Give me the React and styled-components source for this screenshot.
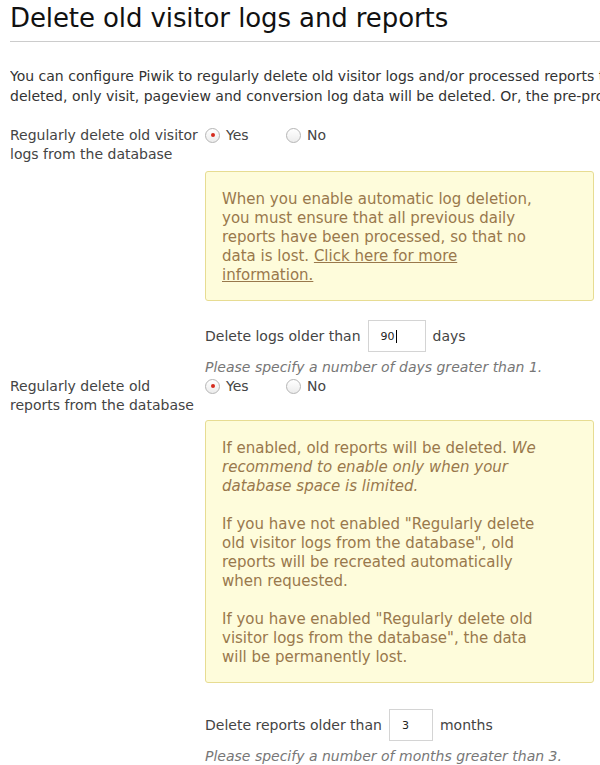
import React from 'react'
import styled, { createGlobalStyle } from 'styled-components'

const GlobalStyle = createGlobalStyle`
  body {
    margin: 0;
    background: #fff;
    font-family: "DejaVu Sans", Verdana, sans-serif;
    color: #333;
    overflow: hidden;
  }
`

const Page = styled.div`
  padding: 0 0 0 10px;
  width: 590px;
`

const Title = styled.h2`
  margin: 0;
  padding: 3px 0 7px;
  font-size: 26px;
  line-height: 31px;
  font-weight: normal;
  color: #111;
  letter-spacing: -0.1px;
  border-bottom: 1px solid #ccc;
  white-space: nowrap;
`

const Intro = styled.p`
  margin: 24px 0 20px;
  font-size: 14px;
  line-height: 20px;
  white-space: nowrap;
  overflow: hidden;
`

const Row = styled.div`
  display: grid;
  grid-template-columns: 195px 1fr;
`

const Label = styled.div`
  font-size: 14px;
  line-height: 18.5px;
  color: #444;
  white-space: nowrap;
`

const Field = styled.div`
  display: flex;
  flex-direction: column;
  padding-right: 6px;
`

const Radios = styled.div`
  display: flex;
  height: 18px;
  align-items: center;
`

const Option = styled.label`
  display: flex;
  align-items: center;
  gap: 6px;
  min-width: 81px;
  font-size: 14px;
  color: #444;
`

const Circle = styled.span`
  width: 13px;
  height: 13px;
  border-radius: 50%;
  border: 1px solid #b5b5b5;
  background: linear-gradient(#ffffff, #ececec);
  display: flex;
  align-items: center;
  justify-content: center;

  &::after {
    content: '';
    width: 4px;
    height: 4px;
    border-radius: 50%;
    background: ${(p) => (p.checked ? '#d52b1e' : 'transparent')};
  }
`

const Notice = styled.div`
  margin-top: ${(p) => p.top}px;
  background: #fefcdb;
  border: 1px solid #e7dc92;
  border-radius: 3px;
  padding: 18px 16px 15px;
  font-size: 15px;
  line-height: 19px;
  color: #99784c;
  white-space: nowrap;

  p {
    margin: 0 0 19px;
  }
  p:last-child {
    margin-bottom: 0;
  }
  a {
    color: #99784c;
    text-decoration: underline;
  }
`

const Older = styled.div`
  display: flex;
  align-items: center;
  gap: 7px;
  margin-top: ${(p) => p.top}px;
  font-size: 14px;
  color: #444;
`

const Input = styled.div`
  box-sizing: border-box;
  width: ${(p) => p.w}px;
  height: 32px;
  border: 1px solid #d4d4d4;
  display: flex;
  align-items: center;
  padding-left: 12px;
  font-size: 11px;
  color: #222;
`

const Caret = styled.span`
  display: inline-block;
  width: 1px;
  height: 13px;
  background: #000;
  margin-left: 1px;
`

const Hint = styled.div`
  font-size: 14px;
  font-style: italic;
  color: #777;
  line-height: 19px;
  margin-top: 6px;
  white-space: nowrap;
`

const YesNo = () => (
  <Radios>
    <Option>
      <Circle checked />
      Yes
    </Option>
    <Option>
      <Circle />
      No
    </Option>
  </Radios>
)

const App = () => (
  <Page>
    <GlobalStyle />
    <Title>Delete old visitor logs and reports</Title>
    <Intro>
      You can configure Piwik to regularly delete old visitor logs and/or processed reports to keep your database size small. If enabled,
      <br />
      deleted, only visit, pageview and conversion log data will be deleted. Or, the pre-processed reports will be deleted.
    </Intro>

    <Row>
      <Label>
        Regularly delete old visitor
        <br />
        logs from the database
      </Label>
      <Field>
        <YesNo />
        <Notice top={27}>
          When you enable automatic log deletion,
          <br />
          you must ensure that all previous daily
          <br />
          reports have been processed, so that no
          <br />
          data is lost. <a href="#">Click here for more
          <br />
          information.</a>
        </Notice>
        <Older top={19}>
          Delete logs older than
          <Input w={58}>
            90<Caret />
          </Input>
          days
        </Older>
        <Hint>Please specify a number of days greater than 1.</Hint>
      </Field>
    </Row>

    <Row>
      <Label>
        Regularly delete old
        <br />
        reports from the database
      </Label>
      <Field>
        <YesNo />
        <Notice top={25}>
          <p>
            If enabled, old reports will be deleted. <em>We
            <br />
            recommend to enable only when your
            <br />
            database space is limited.</em>
          </p>
          <p>
            If you have not enabled "Regularly delete
            <br />
            old visitor logs from the database", old
            <br />
            reports will be recreated automatically
            <br />
            when requested.
          </p>
          <p>
            If you have enabled "Regularly delete old
            <br />
            visitor logs from the database", the data
            <br />
            will be permanently lost.
          </p>
        </Notice>
        <Older top={26}>
          Delete reports older than
          <Input w={44}>3</Input>
          months
        </Older>
        <Hint>Please specify a number of months greater than 3.</Hint>
      </Field>
    </Row>
  </Page>
)

export default App
